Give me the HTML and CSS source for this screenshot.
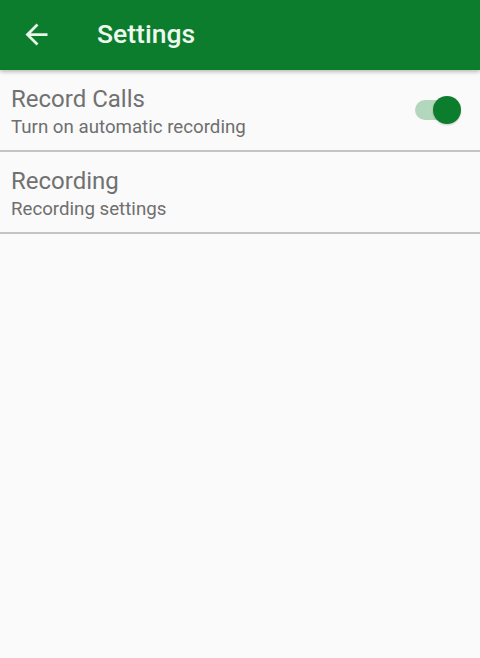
FILE: index.html
```html
<!DOCTYPE html>
<html>
<head>
<meta charset="utf-8">
<link rel="stylesheet" href="styles.css">
</head>
<body>
<header class="appbar">
  <svg class="back" viewBox="0 0 24 24" width="33" height="33"><path d="M20 11H7.83l5.59-5.59L12 4l-8 8 8 8 1.41-1.41L7.83 13H20v-2z" fill="#e8f5e9"/></svg>
  <h1 class="title">Settings</h1>
</header>
<main class="list">
  <div class="row">
    <div class="texts">
      <div class="primary">Record Calls</div>
      <div class="secondary">Turn on automatic recording</div>
    </div>
    <div class="switch"><div class="track"></div><div class="thumb"></div></div>
  </div>
  <div class="row">
    <div class="texts">
      <div class="primary">Recording</div>
      <div class="secondary">Recording settings</div>
    </div>
  </div>
</main>
</body>
</html>
```
FILE: styles.css
```css
html, body { margin: 0; padding: 0; }
body {
  background: #fafafa;
  font-family: Roboto, "Noto Sans", sans-serif;
  width: 480px;
  height: 658px;
  overflow: hidden;
}
.appbar {
  height: 70px;
  background: #0b7d2c;
  display: flex;
  align-items: center;
  box-shadow: 0 2px 4px rgba(0,0,0,0.25);
  position: relative;
  z-index: 1;
}
.back { margin-left: 20px; margin-top: -2px; flex: none; }
.title {
  margin: -3px 0 0 44px;
  color: #eef8ef;
  font-size: 26.5px;
  font-weight: 500;
}
.row {
  height: 80px;
  border-bottom: 2px solid #c4c4c4;
  display: flex;
  align-items: center;
  padding: 0 11px;
}
.texts { flex: 1; margin-top: 4px; }
.primary {
  font-size: 24px;
  color: #717171;
  line-height: 30px;
}
.secondary {
  font-size: 18.7px;
  color: #6f6f6f;
  line-height: 27px;
}
.switch {
  position: relative;
  width: 48px;
  height: 28px;
  margin-right: 6px;
  margin-top: 0;
}
.track {
  position: absolute;
  left: 0;
  top: 4px;
  width: 38px;
  height: 20px;
  border-radius: 10px;
  background: #b3d7bc;
}
.thumb {
  position: absolute;
  right: 2px;
  top: 0;
  width: 28px;
  height: 28px;
  border-radius: 50%;
  background: #0b7d2c;
  box-shadow: 0 1px 2px rgba(0,0,0,0.2);
}
```
